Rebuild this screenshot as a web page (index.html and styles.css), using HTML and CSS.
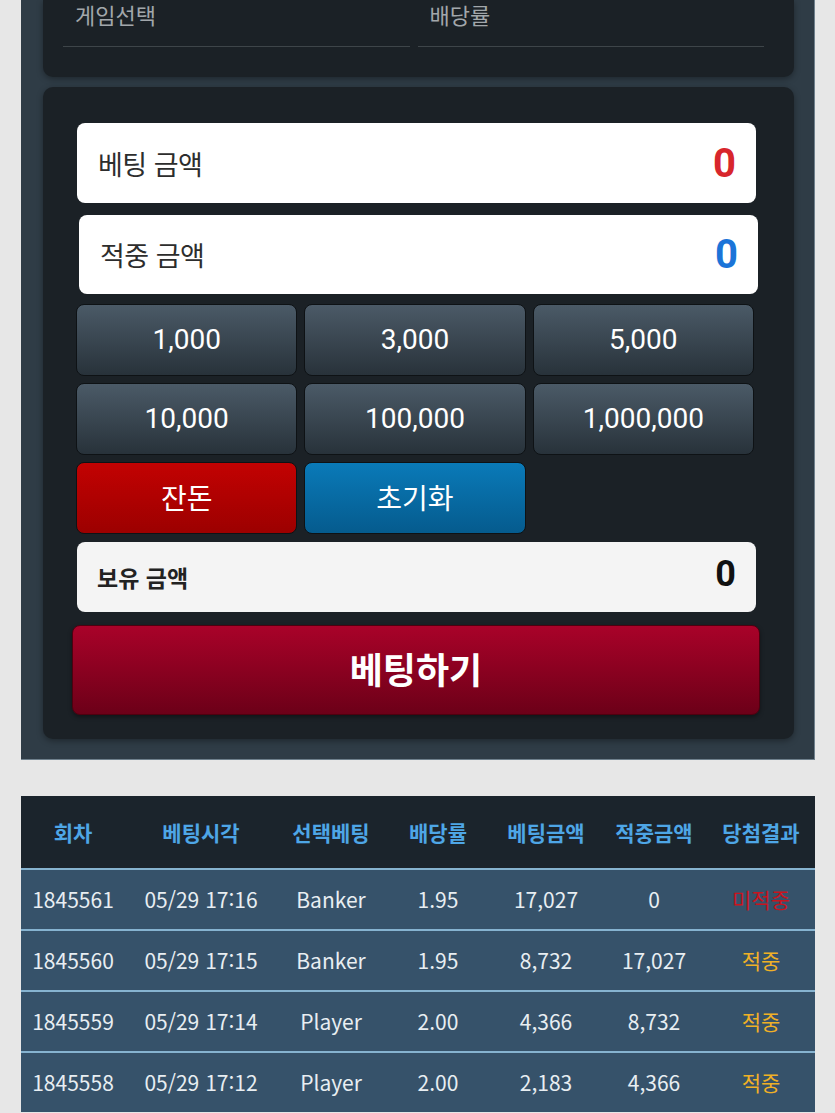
FILE: index.html
```html
<!DOCTYPE html>
<html lang="ko">
<head>
    <meta charset="UTF-8">
    <meta name="viewport" content="width=device-width, initial-scale=1.0">
    <title>베팅</title>
    <link rel="stylesheet" href="styles.css">
</head>
<body>
    <div class="bet-wrap">
        <div class="card card-top">
            <div class="field">게임선택</div>
            <div class="field">배당률</div>
        </div>

        <div class="card card-main">
            <div class="amount-box">
                <span class="amount-label">베팅 금액</span>
                <span class="amount-value red">0</span>
            </div>
            <div class="amount-box shifted">
                <span class="amount-label">적중 금액</span>
                <span class="amount-value blue">0</span>
            </div>

            <div class="chip-grid">
                <button class="chip">1,000</button>
                <button class="chip">3,000</button>
                <button class="chip">5,000</button>
                <button class="chip">10,000</button>
                <button class="chip">100,000</button>
                <button class="chip">1,000,000</button>
                <button class="chip chip-red">잔돈</button>
                <button class="chip chip-blue">초기화</button>
            </div>

            <div class="hold-box">
                <span class="hold-label">보유 금액</span>
                <span class="hold-value">0</span>
            </div>

            <button class="bet-button">베팅하기</button>
        </div>
    </div>

    <table class="history">
        <colgroup>
            <col style="width:104px">
            <col style="width:152px">
            <col style="width:108px">
            <col style="width:106px">
            <col style="width:110px">
            <col style="width:106px">
            <col style="width:108px">
        </colgroup>
        <thead>
            <tr>
                <th>회차</th>
                <th>베팅시각</th>
                <th>선택베팅</th>
                <th>배당률</th>
                <th>베팅금액</th>
                <th>적중금액</th>
                <th>당첨결과</th>
            </tr>
        </thead>
        <tbody>
            <tr>
                <td>1845561</td>
                <td>05/29 17:16</td>
                <td>Banker</td>
                <td>1.95</td>
                <td>17,027</td>
                <td>0</td>
                <td class="lose">미적중</td>
            </tr>
            <tr>
                <td>1845560</td>
                <td>05/29 17:15</td>
                <td>Banker</td>
                <td>1.95</td>
                <td>8,732</td>
                <td>17,027</td>
                <td class="win">적중</td>
            </tr>
            <tr>
                <td>1845559</td>
                <td>05/29 17:14</td>
                <td>Player</td>
                <td>2.00</td>
                <td>4,366</td>
                <td>8,732</td>
                <td class="win">적중</td>
            </tr>
            <tr>
                <td>1845558</td>
                <td>05/29 17:12</td>
                <td>Player</td>
                <td>2.00</td>
                <td>2,183</td>
                <td>4,366</td>
                <td class="win">적중</td>
            </tr>
        </tbody>
    </table>
</body>
</html>
```

FILE: styles.css
```css
body {
    margin: 0;
    padding: 0;
    background: #e7e7e7;
    font-family: "Noto Sans CJK KR", "Noto Sans", sans-serif;
    overflow: hidden;
}

.bet-wrap {
    width: 794px;
    margin-left: 21px;
    box-sizing: border-box;
    background: #2f3c46;
    border-right: 1px solid #6f808c;
    border-bottom: 1px solid #6f808c;
    padding: 0 20px 20px 22px;
}

.card {
    background: #1b2126;
    border-radius: 10px;
    box-shadow: 0 2px 6px rgba(0, 0, 0, 0.35);
}

.card-top {
    display: flex;
    gap: 8px;
    padding: 0 30px 30px 20px;
    border-top-left-radius: 0;
    border-top-right-radius: 0;
    margin-bottom: 10px;
}

.field {
    flex: 1;
    height: 47px;
    box-sizing: border-box;
    padding-left: 12px;
    font-size: 22px;
    line-height: 28px;
    color: #a2a7ab;
    border-bottom: 1px solid #3e4549;
}

.card-main {
    padding: 36px 38px 24px 34px;
}

.amount-box {
    height: 80px;
    background: #fff;
    border-radius: 8px;
    display: flex;
    align-items: center;
    justify-content: space-between;
    padding: 0 20px 0 21px;
    margin-bottom: 12px;
}

.amount-box.shifted {
    margin: 0 -2px 10px 2px;
    height: 79px;
}

.amount-label {
    font-size: 27px;
    color: #2d2d2d;
    letter-spacing: -0.5px;
}

.amount-value {
    font-family: Roboto, "Noto Sans", sans-serif;
    font-weight: bold;
    font-size: 40px;
}

.red {
    color: #d8262c;
}

.blue {
    color: #1b74d8;
}

.chip-grid {
    display: grid;
    grid-template-columns: repeat(3, 1fr);
    gap: 7px;
    margin: 0 2px 8px -1px;
}

.chip {
    height: 72px;
    border: 1.5px solid #0e1215;
    border-radius: 8px;
    background: linear-gradient(to bottom, #4b5a67, #28323a);
    color: #fff;
    font-family: Roboto, "Noto Sans CJK KR", sans-serif;
    font-size: 28px;
    padding: 0 0 2px;
}

.chip-red {
    background: linear-gradient(to bottom, #c20202, #9c0000);
}

.chip-blue {
    background: linear-gradient(to bottom, #0a7ab8, #055b8e);
}

.hold-box {
    height: 70px;
    background: #f4f4f4;
    border-radius: 8px;
    display: flex;
    align-items: center;
    justify-content: space-between;
    padding: 0 20px 0 20px;
    margin-bottom: 13px;
}

.hold-label {
    font-size: 23px;
    font-weight: bold;
    color: #222;
}

.hold-value {
    font-family: Roboto, "Noto Sans", sans-serif;
    font-size: 36px;
    font-weight: bold;
    color: #111;
    padding-bottom: 6px;
}

.bet-button {
    display: block;
    width: calc(100% + 9px);
    height: 90px;
    margin: 0 -4px 0 -5px;
    border: 1px solid #4e000f;
    border-radius: 8px;
    background: linear-gradient(to bottom, #a90229, #6c0018);
    color: #fff;
    font-family: "Noto Sans CJK KR", sans-serif;
    font-size: 36px;
    font-weight: bold;
    padding: 0 0 4px;
    box-shadow: 0 2px 4px rgba(0, 0, 0, 0.4);
}

.history {
    width: 794px;
    margin: 36px 0 0 21px;
    border-collapse: collapse;
    table-layout: fixed;
}

.history th {
    height: 72px;
    background: #1b242c;
    color: #4ea6e6;
    font-size: 21px;
    font-weight: bold;
    text-align: center;
    padding: 0;
}

.history td {
    height: 57px;
    background: #36526a;
    border-top: 2px solid #86b3d0;
    color: #e8eef2;
    font-size: 21px;
    text-align: center;
    padding: 0 0 2px;
}

.history td.lose {
    color: #c8141e;
}

.history td.win {
    color: #f0b126;
}
```
